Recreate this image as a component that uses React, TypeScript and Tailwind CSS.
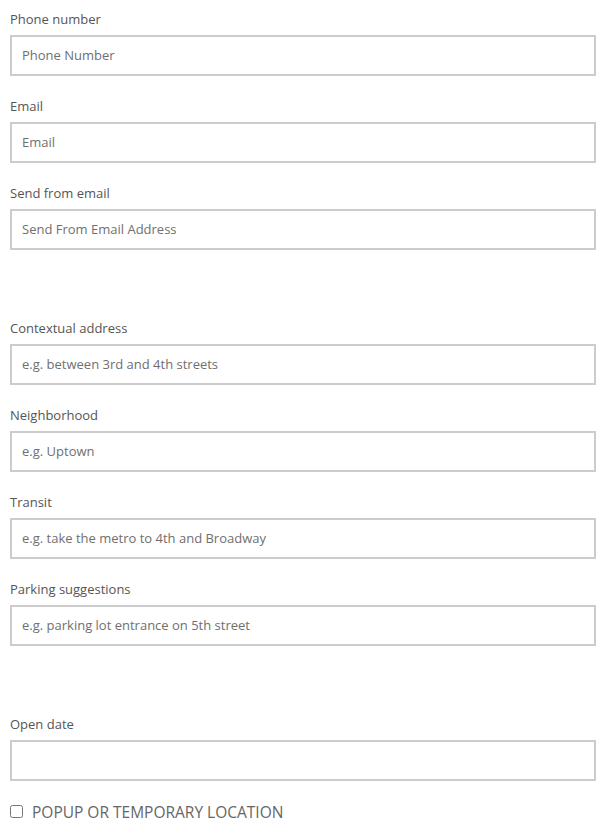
import React from "react";

function Field({ label, placeholder }: { label: string; placeholder?: string }) {
  return (
    <div className="flex flex-col">
      <label className="text-[13px] leading-[18px] text-[#555]">{label}</label>
      <input
        className="mt-[7px] h-[41px] w-full border-2 border-[#cccccc] bg-white px-[10px] pb-[2px] text-[13px] text-[#555] placeholder:text-[#6f6f6f] outline-none"
        placeholder={placeholder}
      />
    </div>
  );
}

export default function App() {
  return (
    <div className="bg-white min-h-[838px] pl-[10px] pr-[15px] pt-[10px] font-['Open_Sans',sans-serif]">
      <div className="flex flex-col gap-[21px]">
        <Field label="Phone number" placeholder="Phone Number" />
        <Field label="Email" placeholder="Email" />
        <Field label="Send from email" placeholder="Send From Email Address" />
      </div>
      <div className="mt-[69px] flex flex-col gap-[21px]">
        <Field label="Contextual address" placeholder="e.g. between 3rd and 4th streets" />
        <Field label="Neighborhood" placeholder="e.g. Uptown" />
        <Field label="Transit" placeholder="e.g. take the metro to 4th and Broadway" />
        <Field label="Parking suggestions" placeholder="e.g. parking lot entrance on 5th street" />
      </div>
      <div className="mt-[69px] flex flex-col">
        <Field label="Open date" />
        <label className="mt-[21px] flex items-center gap-[9px]">
          <input type="checkbox" className="m-0 mb-[2px] h-[13px] w-[13px]" />
          <span className="text-[15.5px] leading-[20px] text-[#666]">POPUP OR TEMPORARY LOCATION</span>
        </label>
      </div>
    </div>
  );
}
